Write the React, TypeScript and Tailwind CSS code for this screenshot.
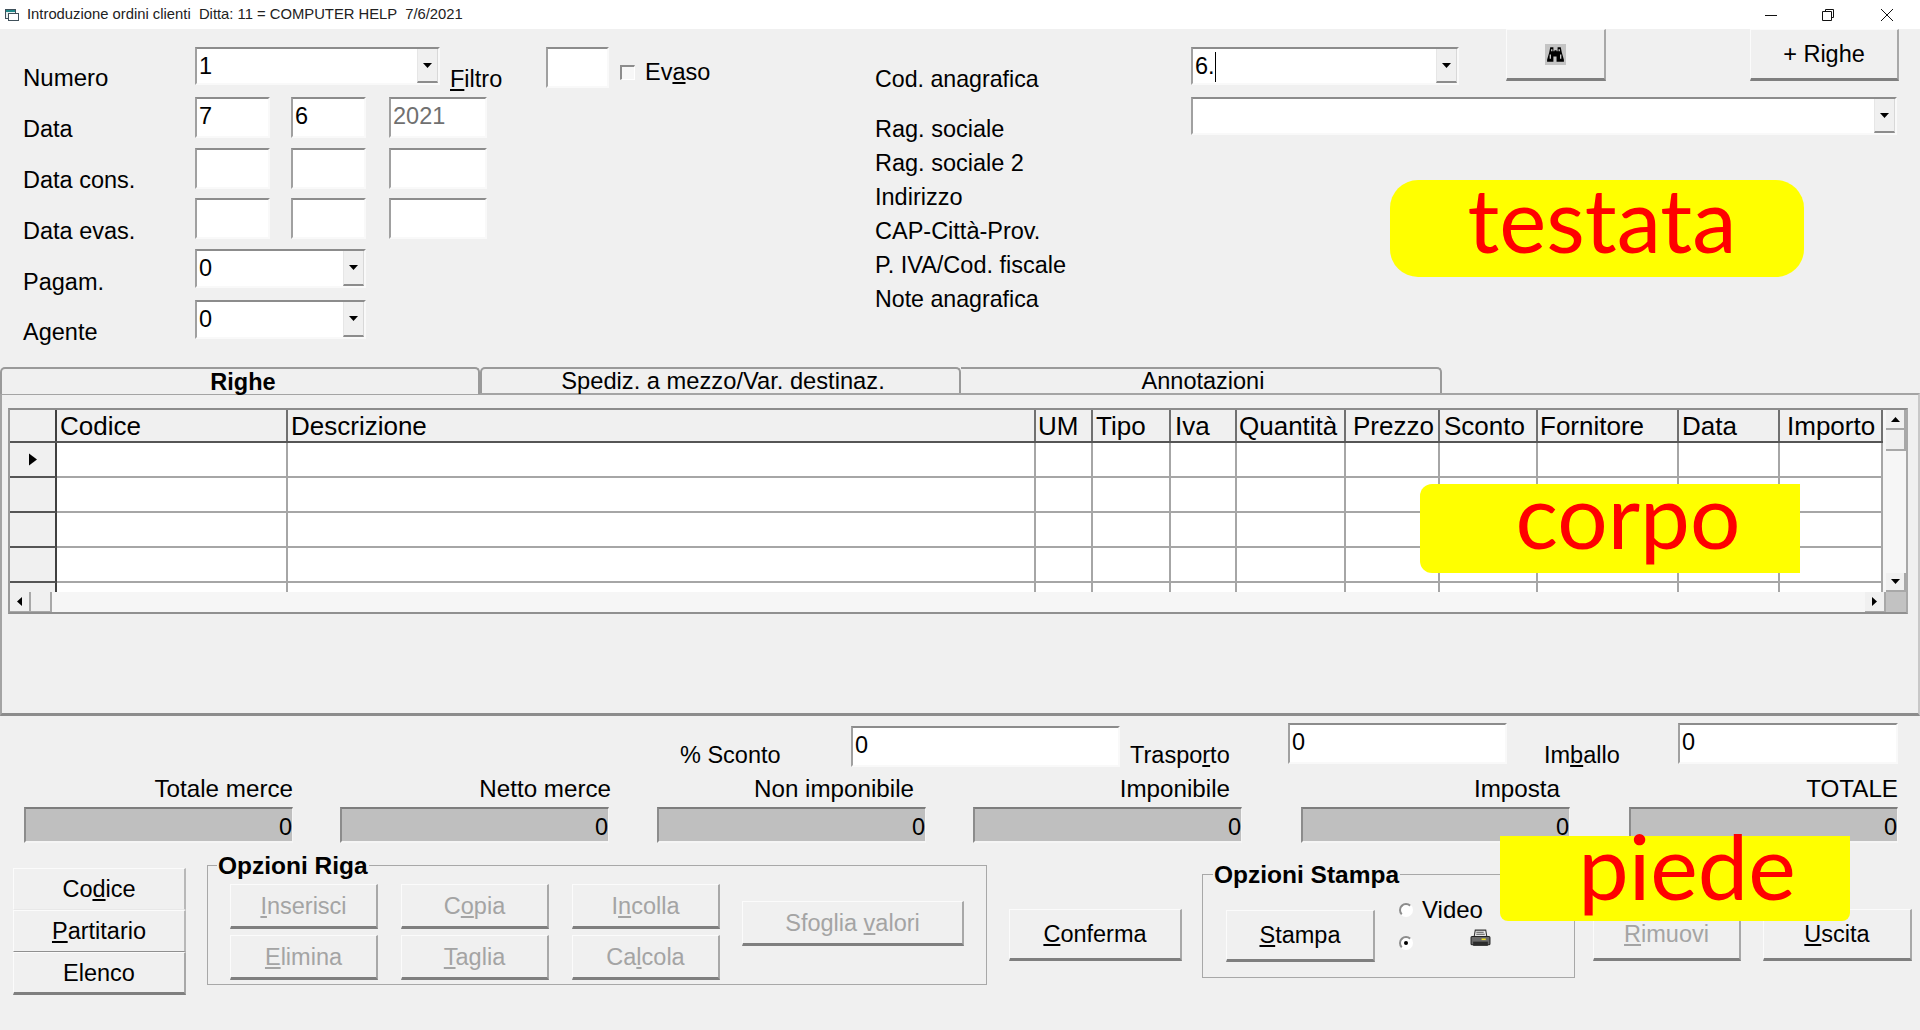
import React from "react";

const raised = "bg-[#f0f0f0] border-t border-l border-t-[#fbfbfb] border-l-[#fbfbfb] border-r-2 border-r-[#a8a8a8] border-b-[3px] border-b-[#7f7f7f]";
const sunken = "border-t-2 border-l-2 border-t-[#8c8c8c] border-l-[#a0a0a0] border-r-2 border-b-2 border-r-[#f9f9f9] border-b-[#f9f9f9]";

function Btn({ className = "", disabled = false, children }: { className?: string; disabled?: boolean; children: React.ReactNode }) {
  return (
    <div className={`${raised} flex items-center justify-center shrink-0 ${disabled ? "text-[#a4a4a4]" : "text-black"} ${className}`}>
      <span className="pt-[2px]">{children}</span>
    </div>
  );
}

function Field({ className = "", children, gray = false }: { className?: string; children?: React.ReactNode; gray?: boolean }) {
  return (
    <div className={`${sunken} bg-white shrink-0 pl-[2px] pt-[3px] leading-[28px] ${gray ? "text-[#707070]" : "text-black"} ${className}`}>
      {children}
    </div>
  );
}

function Arrow({ dir = "down" }: { dir?: "down" | "up" | "left" | "right" }) {
  const pts = { down: "0,0 9,0 4.5,5", up: "0,5 9,5 4.5,0", left: "5,0 5,9 0,4.5", right: "0,0 0,9 5,4.5" }[dir];
  const vb = dir === "down" || dir === "up" ? "0 0 9 5" : "0 0 5 9";
  return (
    <svg viewBox={vb} className={dir === "down" || dir === "up" ? "w-[9px] h-[5px]" : "w-[5px] h-[9px]"}>
      <polygon points={pts} fill="#000" />
    </svg>
  );
}

function Combo({ className = "", children }: { className?: string; children?: React.ReactNode }) {
  return (
    <div className={`${sunken} bg-white shrink-0 flex justify-between pl-[2px] leading-[28px] text-black ${className}`}>
      <div className="pt-[3px] flex items-start">{children}</div>
      <div className="w-[21px] h-full bg-[#f0f0f0] border-r border-r-[#d8d8d8] border-b-2 border-b-[#8c8c8c] border-l border-l-[#e6e6e6] flex items-center justify-center">
        <Arrow />
      </div>
    </div>
  );
}

function Label({ className = "", children }: { className?: string; children: React.ReactNode }) {
  return <div className={`leading-[28px] whitespace-pre shrink-0 text-black ${className}`}>{children}</div>;
}

const cols = [
  { t: "", p: "" },
  { t: "Codice", p: "pl-[3px]" },
  { t: "Descrizione", p: "pl-[3px]" },
  { t: "UM", p: "pl-[2px]" },
  { t: "Tipo", p: "pl-[3px]" },
  { t: "Iva", p: "pl-[4px]" },
  { t: "Quantità", p: "pl-[2px]" },
  { t: "Prezzo", p: "pl-[7px]" },
  { t: "Sconto", p: "pl-[4px]" },
  { t: "Fornitore", p: "pl-[2px]" },
  { t: "Data", p: "pl-[3px]" },
  { t: "Importo", p: "pl-[7px]" },
];
const gridCols = "grid grid-cols-[47px_231px_748px_57px_78px_66px_109px_94px_98px_141px_101px_103px]";

function DataGrid() {
  return (
    <div className="ml-[6px] mt-[13px] w-[1900px] h-[206px] border-t-2 border-l-2 border-r-2 border-b-2 border-t-[#8c8c8c] border-l-[#9a9a9a] border-r-[#a8a8a8] border-b-[#909090] flex flex-col">
      <div className="flex h-[182px]">
        <div className="w-[1873px] h-[182px] overflow-hidden">
          <div className={`${gridCols} h-[33px] border-b-2 border-b-[#555555] bg-[#f0f0f0]`}>
            {cols.map((c, i) => (
              <div key={i} className={`text-[26px] leading-[33px] whitespace-nowrap overflow-hidden border-r-2 ${i === 0 ? "border-r-[#404040]" : "border-r-[#707070]"} ${c.p}`}>{c.t}</div>
            ))}
          </div>
          {[0, 1, 2, 3, 4].map((r) => (
            <div key={r} className={`${gridCols} h-[35px]`}>
              {cols.map((_, i) =>
                i === 0 ? (
                  <div key={i} className="bg-[#f0f0f0] border-r-2 border-r-[#404040] border-b-2 border-b-[#555555] flex items-center justify-center">
                    {r === 0 && (
                      <svg viewBox="0 0 8 12" className="w-[8px] h-[13px]">
                        <polygon points="0,0 8,6 0,12" fill="#000" />
                      </svg>
                    )}
                  </div>
                ) : (
                  <div key={i} className="bg-white border-r-2 border-r-[#a6a6a6] border-b-2 border-b-[#a6a6a6]" />
                )
              )}
            </div>
          ))}
        </div>
        <div className="w-[23px] pl-[3px] h-full bg-[#f6f6f6] flex flex-col justify-between">
          <div className="flex flex-col">
            <div className="h-[20px] bg-[#f0f0f0] border-r-2 border-b-2 border-r-[#a8a8a8] border-b-[#a8a8a8] flex items-center justify-center"><Arrow dir="up" /></div>
            <div className="h-[21px] bg-[#f0f0f0] border-r-2 border-b-2 border-r-[#a8a8a8] border-b-[#a8a8a8]" />
          </div>
          <div className="h-[19px] bg-[#f0f0f0] border-r-2 border-b-2 border-r-[#a8a8a8] border-b-[#a8a8a8] flex items-center justify-center"><Arrow /></div>
        </div>
      </div>
      <div className="flex h-[20px] bg-[#f6f6f6]">
        <div className="w-[21px] bg-[#f0f0f0] border-r-2 border-r-[#a8a8a8] border-b border-b-[#a8a8a8] flex items-center justify-center"><Arrow dir="left" /></div>
        <div className="w-[21px] bg-[#f0f0f0] border-r-2 border-r-[#a8a8a8] border-b border-b-[#a8a8a8]" />
        <div className="flex-1" />
        <div className="w-[21px] bg-[#f0f0f0] border-r-2 border-r-[#a8a8a8] border-b border-b-[#a8a8a8] flex items-center justify-center"><Arrow dir="right" /></div>
        <div className="w-[20px] bg-[#c2c2c2]" />
      </div>
    </div>
  );
}

function Total({ label, className = "", labelClass = "" }: { label: string; className?: string; labelClass?: string }) {
  return (
    <div className={`w-[269px] shrink-0 flex flex-col ${className}`}>
      <div className={`h-[32px] leading-[28px] text-[24.2px] text-right whitespace-nowrap ${labelClass}`}>{label}</div>
      <div className="h-[36px] bg-[#bfbfbf] border-t-2 border-l-2 border-t-[#7d7d7d] border-l-[#8c8c8c] border-r border-b-2 border-r-[#f5f5f5] border-b-[#f5f5f5] text-right leading-[36px]">0</div>
    </div>
  );
}

function Radio({ on = false }: { on?: boolean }) {
  return (
    <div className="w-[14px] h-[14px] rounded-full border-2 border-t-[#8c8c8c] border-l-[#8c8c8c] border-r-white border-b-white bg-white flex items-center justify-center shrink-0">
      {on && <div className="w-[4px] h-[4px] rounded-full bg-black" />}
    </div>
  );
}

const tag = "absolute bg-[#ffff00] text-[#ff0000] flex items-center justify-center font-['Lato','Noto_Sans',sans-serif] leading-none";

export default function App() {
  return (
    <div className="relative w-[1920px] h-[1030px] overflow-hidden bg-[#f0f0f0] font-['Liberation_Sans',Arial,sans-serif] text-[23.5px] text-black flex flex-col">
      {/* Title bar */}
      <div className="h-[29px] bg-white flex items-center shrink-0">
        <svg viewBox="0 0 16 16" className="ml-[4px] w-[16px] h-[16px]">
          <rect x="1.5" y="2.5" width="10" height="9" fill="#e8f0f0" stroke="#40505a" />
          <rect x="4.5" y="6.5" width="10" height="7" fill="#fff" stroke="#40505a" />
          <rect x="2" y="3" width="9" height="2" fill="#1f8a8a" />
        </svg>
        <span className="ml-[7px] text-[14.8px] font-['Liberation_Sans',sans-serif] text-[#222] whitespace-pre">Introduzione ordini clienti  Ditta: 11 = COMPUTER HELP  7/6/2021</span>
        <div className="flex-1" />
        <svg viewBox="0 0 12 12" className="w-[12px] h-[12px]"><path d="M0 6.5h12" stroke="#111" fill="none" /></svg>
        <svg viewBox="0 0 12 12" className="ml-[45px] w-[12px] h-[12px]"><path d="M3.5 2.5V.5h8v8h-2M.5 2.5h9v9h-9z" stroke="#111" fill="none" /></svg>
        <svg viewBox="0 0 14 14" className="ml-[46px] mr-[26px] w-[14px] h-[14px]"><path d="M1 1l12 12M13 1L1 13" stroke="#111" fill="none" /></svg>
      </div>

      {/* Testata */}
      <div className="h-[338px] flex shrink-0">
        <div className="w-[875px] pl-[23px] pt-[18px] flex flex-col shrink-0">
          <div className="flex h-[41px]">
            <Label className="w-[172px] mt-[17px] text-[24px]">Numero</Label>
            <Combo className="w-[245px] h-[38px]">1</Combo>
            <Label className="ml-[10px] mt-[18px] w-[96px]"><u>F</u>iltro</Label>
            <Field className="w-[63px] h-[41px]" />
            <div className="ml-[11px] mt-[18px] w-[15px] h-[15px] bg-[#f7f7f7] border-t-2 border-l-2 border-t-[#8c8c8c] border-l-[#8c8c8c] border-r border-b border-r-white border-b-white" />
            <Label className="ml-[10px] mt-[11px]">Ev<u>a</u>so</Label>
          </div>
          <div className="flex h-[41px] mt-[9px]">
            <Label className="w-[172px] mt-[18px]">Data</Label>
            <Field className="w-[75px] h-[41px]">7</Field>
            <Field className="w-[75px] h-[41px] ml-[21px]">6</Field>
            <Field className="w-[98px] h-[41px] ml-[23px]" gray>2021</Field>
          </div>
          <div className="flex h-[41px] mt-[10px]">
            <Label className="w-[172px] mt-[18px]">Data cons.</Label>
            <Field className="w-[75px] h-[41px]" />
            <Field className="w-[75px] h-[41px] ml-[21px]" />
            <Field className="w-[98px] h-[41px] ml-[23px]" />
          </div>
          <div className="flex h-[41px] mt-[9px]">
            <Label className="w-[172px] mt-[19px]">Data evas.</Label>
            <Field className="w-[75px] h-[41px]" />
            <Field className="w-[75px] h-[41px] ml-[21px]" />
            <Field className="w-[98px] h-[41px] ml-[23px]" />
          </div>
          <div className="flex h-[41px] mt-[10px]">
            <Label className="w-[172px] mt-[19px]">Pagam.</Label>
            <Combo className="w-[171px] h-[39px]">0</Combo>
          </div>
          <div className="flex h-[41px] mt-[10px]">
            <Label className="w-[172px] mt-[18px]">Agente</Label>
            <Combo className="w-[171px] h-[39px]">0</Combo>
          </div>
        </div>

        <div className="flex-1 flex flex-col">
          <div className="flex h-[68px]">
            <Label className="w-[316px] mt-[36px] text-[23.2px]">Cod. anagrafica</Label>
            <Combo className="w-[268px] h-[38px] mt-[18px]">6.<span className="inline-block w-px h-[30px] bg-black" /></Combo>
            <Btn className="w-[100px] h-[52px] ml-[47px]">
              <svg viewBox="0 0 20 20" className="w-[21px] h-[21px] block -mt-[2px]">
                <rect width="20" height="20" fill="#c4c4c4" />
                <path d="M5 3h3v4h1v-1h2v1h1V3h3l1 5 2 7v2h-7v-5h-3v5H2v-2l2-7z" fill="#000" />
                <path d="M5 10v4M15 10v4M6.5 5v2M13.5 5v2" stroke="#fff" strokeWidth="1" />
              </svg>
            </Btn>
            <Btn className="w-[149px] h-[52px] ml-[144px]">+ Righe</Btn>
          </div>
          <div className="flex h-[49px]">
            <Label className="w-[316px] mt-[18px]">Rag. sociale</Label>
            <Combo className="w-[706px] h-[38px]" />
          </div>
          <Label className="h-[34px] leading-[34px]">Rag. sociale 2</Label>
          <Label className="h-[34px] leading-[34px]">Indirizzo</Label>
          <Label className="h-[34px] leading-[34px]">CAP-Città-Prov.</Label>
          <Label className="h-[34px] leading-[34px]">P. IVA/Cod. fiscale</Label>
          <Label className="h-[34px] leading-[34px] text-[23.2px]">Note anagrafica</Label>
        </div>
      </div>

      {/* Tabs */}
      <div className="flex h-[26px] shrink-0 relative z-10 text-[23.5px]">
        <div className="w-[480px] h-[27px] border-t-2 border-r-2 border-l-2 border-t-[#9a9a9a] border-r-[#9a9a9a] border-l-[#9a9a9a] rounded-tl-[5px] rounded-tr-[5px] bg-[#f0f0f0] text-center font-bold leading-[26px] pl-[6px]">Righe</div>
        <div className="w-[481px] h-[26px] border-t-2 border-r-2 border-l-2 border-t-[#9a9a9a] border-r-[#9a9a9a] border-l-[#9a9a9a] rounded-tr-[5px] rounded-tl-[5px] text-center leading-[25px] pl-[5px] text-[23.7px]">Spediz. a mezzo/Var. destinaz.</div>
        <div className="w-[481px] h-[26px] border-t-2 border-r-2 border-t-[#9a9a9a] border-r-[#9a9a9a] rounded-tr-[5px] text-center leading-[25px] pl-[5px]">Annotazioni</div>
      </div>

      {/* Corpo */}
      <div className="h-[323px] shrink-0 border-t-2 border-l-2 border-r-2 border-b-[3px] border-t-[#a4a4a4] border-l-[#a4a4a4] border-r-[#c8c8c8] border-b-[#8c8c8c]">
        <DataGrid />
      </div>

      {/* Piede */}
      <div className="flex-1 flex flex-col">
        <div className="flex h-[44px] mt-[7px] shrink-0">
          <Label className="ml-[680px] w-[171px] mt-[18px]">% Sconto</Label>
          <Field className="w-[269px] h-[41px] mt-[3px]">0</Field>
          <Label className="ml-[10px] w-[158px] mt-[18px]">Traspo<u>r</u>to</Label>
          <Field className="w-[219px] h-[41px]">0</Field>
          <Label className="ml-[37px] w-[134px] mt-[18px]">Im<u>b</u>allo</Label>
          <Field className="w-[220px] h-[41px]">0</Field>
        </div>
        <div className="flex mt-[8px] shrink-0">
          <Total className="ml-[24px]" label="Totale merce" />
          <Total className="ml-[47px]" label="Netto merce" labelClass="-mr-[2px]" />
          <Total className="ml-[48px]" label="Non imponibile" labelClass="pr-[12px]" />
          <Total className="ml-[47px]" label="Imponibile" labelClass="pr-[12px]" />
          <Total className="ml-[59px]" label="Imposta" labelClass="pr-[10px]" />
          <Total className="ml-[59px]" label="TOTALE" />
        </div>
        <div className="flex items-start mt-[22px] shrink-0">
          <div className="ml-[13px] mt-[3px] w-[173px] flex flex-col shrink-0">
            <Btn className="h-[42px] !border-b !border-b-[#e8e8e8] !border-r-[#b8b8b8]">Co<u>d</u>ice</Btn>
            <Btn className="h-[42px] !border-b !border-b-[#909090] !border-r-[#b8b8b8]"><u>P</u>artitario</Btn>
            <Btn className="h-[43px]">Elenco</Btn>
          </div>
          <div className="ml-[21px] w-[780px] h-[120px] border border-[#a8a8a8] shrink-0 pl-[22px] flex flex-col">
            <div className="-mt-[14px] -ml-[13px] h-[28px] leading-[28px] font-bold text-[24.5px] w-fit px-[1px] bg-[#f0f0f0]">Opzioni Riga</div>
            <div className="flex items-start mt-[4px]">
              <div className="grid grid-cols-[148px_148px_148px] gap-x-[23px] gap-y-[6px]">
                <Btn disabled className="h-[45px]"><u>I</u>nserisci</Btn>
                <Btn disabled className="h-[45px]">C<u>o</u>pia</Btn>
                <Btn disabled className="h-[45px]">I<u>n</u>colla</Btn>
                <Btn disabled className="h-[45px]"><u>E</u>limina</Btn>
                <Btn disabled className="h-[45px]"><u>T</u>aglia</Btn>
                <Btn disabled className="h-[45px]">Ca<u>l</u>cola</Btn>
              </div>
              <Btn disabled className="w-[222px] h-[45px] ml-[22px] mt-[17px]">Sfoglia <u>v</u>alori</Btn>
            </div>
          </div>
          <Btn className="w-[173px] h-[52px] ml-[22px] mt-[44px]"><u>C</u>onferma</Btn>
          <div className="ml-[20px] mt-[9px] w-[373px] h-[104px] border border-[#a8a8a8] shrink-0 pl-[23px] flex flex-col">
            <div className="-mt-[14px] -ml-[13px] h-[28px] leading-[28px] font-bold text-[24.5px] w-fit px-[1px] bg-[#f0f0f0]">Opzioni Stampa</div>
            <div className="flex items-start">
              <Btn className="w-[149px] h-[52px] mt-[21px]"><u>S</u>tampa</Btn>
              <div className="ml-[24px] mt-[7px] flex flex-col">
                <div className="flex items-center h-[28px]">
                  <Radio />
                  <Label className="ml-[9px] text-[24px]">Video</Label>
                </div>
                <div className="flex items-center h-[28px] mt-[5px]">
                  <Radio on />
                  <svg viewBox="0 0 20 18" className="ml-[57px] -mt-[9px] w-[21px] h-[19px]">
                    <path d="M5 1h10l1 6H4z" fill="#e8e8e8" stroke="#333" />
                    <path d="M6 3h7M6 5h8" stroke="#555" />
                    <rect x="1" y="7" width="18" height="8" rx="1" fill="#6a6a6a" stroke="#222" />
                    <rect x="3" y="12" width="14" height="4" fill="#2b2b2b" />
                    <rect x="11" y="9" width="4" height="1.5" fill="#f0e020" />
                  </svg>
                </div>
              </div>
            </div>
          </div>
          <Btn disabled className="w-[148px] h-[52px] ml-[18px] mt-[44px]"><u>R</u>imuovi</Btn>
          <Btn className="w-[149px] h-[52px] ml-[22px] mt-[44px]"><u>U</u>scita</Btn>
        </div>
      </div>

      {/* Etichette sovrapposte */}
      <div className={`${tag} left-[1390px] top-[180px] w-[414px] h-[97px] rounded-[28px] text-[89px] pb-[20px] pl-[10px]`}>testata</div>
      <div className={`${tag} left-[1420px] top-[484px] w-[380px] h-[89px] rounded-l-[12px] text-[89px] pb-[28px] pl-[36px]`}>corpo</div>
      <div className={`${tag} left-[1500px] top-[836px] w-[350px] h-[85px] rounded-b-[8px] text-[90px] pb-[28px] pl-[24px]`}>piede</div>
    </div>
  );
}
